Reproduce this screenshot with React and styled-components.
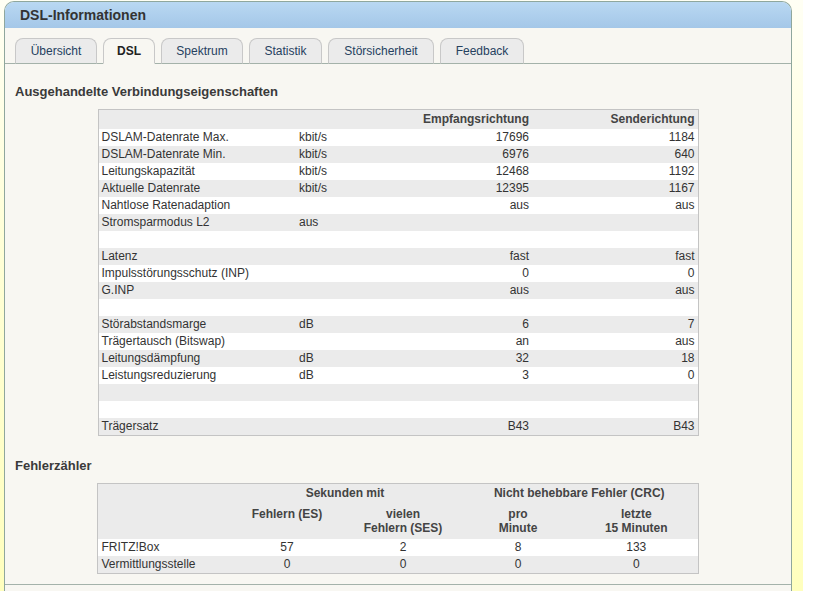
import React from 'react'
import styled, {createGlobalStyle} from 'styled-components'

const Global = createGlobalStyle`
	html, body {
		margin: 0;
		padding: 0;
		background: #ffffff;
	}
	body {
		font-family: "Liberation Sans", Arial, sans-serif;
		font-size: 12px;
		color: #333;
	}
`

const Page = styled.div`
	width: 803px;
	height: 591px;
	box-sizing: border-box;
	padding: 1px 11px 0 4px;
	overflow: hidden;
	background: linear-gradient(to bottom, #fffff4 0%, #ffffd8 40%, #ffffbe 100%);
`
const Box = styled.div`
	border: 1px solid #8fa79d;
	border-bottom: none;
	border-radius: 10px 10px 0 0;
	background: #f8f7f2;
	min-height: 640px;
	overflow: hidden;
`
const Header = styled.div`
	height: 26px;
	line-height: 27px;
	padding-left: 15px;
	font-size: 14px;
	font-weight: bold;
	color: #333;
	background: linear-gradient(to bottom, #b9d8f2, #a4c7e8);
`
const TabBar = styled.div`
	display: flex;
	align-items: flex-end;
	gap: 6px;
	margin-top: 10px;
	padding-left: 10px;
	height: 25px;
	border-bottom: 1px solid #a4b2aa;
`
const Tab = styled.div`
	box-sizing: border-box;
	width: ${p => p.$w}px;
	height: 26px;
	margin-bottom: -1px;
	line-height: 25px;
	text-align: center;
	border: 1px solid #c8c8c8;
	border-bottom: 1px solid ${p => p.$active ? '#f8f7f2' : '#a4b2aa'};
	border-radius: 8px 8px 0 0;
	background: ${p => p.$active ? '#f8f7f2' : '#ebebeb'};
	color: ${p => p.$active ? '#222' : '#26415f'};
	font-weight: ${p => p.$active ? 'bold' : 'normal'};
	cursor: pointer;
`
const Section = styled.div`
	padding: 0 10px;
`
const Heading = styled.h2`
	margin: ${p => p.$top}px 0 10px 0;
	font-size: 13px;
	line-height: 15px;
	font-weight: bold;
	color: #3a3a3a;
`
const Table = styled.table`
	width: 600px;
	margin: 0 auto;
	border-collapse: collapse;
	table-layout: fixed;
	border: 1px solid #c4c4c4;
	background: #fff;
`
const Row = styled.tr`
	background: ${p => p.$gray ? '#ebebeb' : '#ffffff'};
`
const Th = styled.th`
	padding: ${p => p.$tall ? '4px 3px 4px' : '1px 3px'};
	line-height: ${p => p.$tall ? '14px' : '17px'};
	font-weight: bold;
	color: #444;
	text-align: ${p => p.$align || 'left'};
	vertical-align: top;
`
const Td = styled.td`
	padding: 0 3px;
	height: 17px;
	line-height: 17px;
	white-space: nowrap;
	text-align: ${p => p.$align || 'left'};
`
const Footer = styled.div`
	margin-top: 10px;
	border-top: 1px solid #a4b2aa;
	height: 40px;
`

const tabs = [
	['Übersicht', 82],
	['DSL', 52],
	['Spektrum', 82],
	['Statistik', 73],
	['Störsicherheit', 106],
	['Feedback', 84],
]

const rows = [
	['DSLAM-Datenrate Max.', 'kbit/s', '17696', '1184'],
	['DSLAM-Datenrate Min.', 'kbit/s', '6976', '640'],
	['Leitungskapazität', 'kbit/s', '12468', '1192'],
	['Aktuelle Datenrate', 'kbit/s', '12395', '1167'],
	['Nahtlose Ratenadaption', '', 'aus', 'aus'],
	['Stromsparmodus L2', 'aus', '', ''],
	['', '', '', ''],
	['Latenz', '', 'fast', 'fast'],
	['Impulsstörungsschutz (INP)', '', '0', '0'],
	['G.INP', '', 'aus', 'aus'],
	['', '', '', ''],
	['Störabstandsmarge', 'dB', '6', '7'],
	['Trägertausch (Bitswap)', '', 'an', 'aus'],
	['Leitungsdämpfung', 'dB', '32', '18'],
	['Leistungsreduzierung', 'dB', '3', '0'],
	['', '', '', ''],
	['', '', '', ''],
	['Trägersatz', '', 'B43', 'B43'],
]

const fehler = [
	['FRITZ!Box', '57', '2', '8', '133'],
	['Vermittlungsstelle', '0', '0', '0', '0'],
]

const App = () => {
	return <>
		<Global/>
		<Page>
			<Box>
				<Header>DSL-Informationen</Header>
				<TabBar>
					{tabs.map(([t, w]) => <Tab key={t} $w={w} $active={t === 'DSL'}>{t}</Tab>)}
				</TabBar>
				<Section>
					<Heading $top={20}>Ausgehandelte Verbindungseigenschaften</Heading>
					<Table>
						<colgroup>
							<col style={{width: 198}}/>
							<col style={{width: 100}}/>
							<col style={{width: 136}}/>
							<col style={{width: 166}}/>
						</colgroup>
						<thead>
							<Row $gray>
								<Th></Th>
								<Th></Th>
								<Th $align='right'>Empfangsrichtung</Th>
								<Th $align='right'>Senderichtung</Th>
							</Row>
						</thead>
						<tbody>
							{rows.map((r, i) => <Row key={i} $gray={i % 2 === 1}>
								<Td>{r[0]}</Td>
								<Td>{r[1]}</Td>
								<Td $align='right'>{r[2]}</Td>
								<Td $align='right'>{r[3]}</Td>
							</Row>)}
						</tbody>
					</Table>

					<Heading $top={22}>Fehlerzähler</Heading>
					<Table>
						<colgroup>
							<col style={{width: 131}}/>
							<col style={{width: 116}}/>
							<col style={{width: 116}}/>
							<col style={{width: 114}}/>
							<col style={{width: 123}}/>
						</colgroup>
						<thead>
							<Row $gray>
								<Th></Th>
								<Th colSpan={2} $align='center'>Sekunden mit</Th>
								<Th colSpan={2} $align='center'>Nicht behebbare Fehler (CRC)</Th>
							</Row>
							<Row $gray>
								<Th $tall></Th>
								<Th $tall $align='center'>Fehlern (ES)</Th>
								<Th $tall $align='center'>vielen<br/>Fehlern (SES)</Th>
								<Th $tall $align='center'>pro<br/>Minute</Th>
								<Th $tall $align='center'>letzte<br/>15 Minuten</Th>
							</Row>
						</thead>
						<tbody>
							{fehler.map((r, i) => <Row key={r[0]} $gray={i % 2 === 1}>
								<Td>{r[0]}</Td>
								{r.slice(1).map((v, j) => <Td key={j} $align='center'>{v}</Td>)}
							</Row>)}
						</tbody>
					</Table>
				</Section>
				<Footer/>
			</Box>
		</Page>
	</>
}
export default App
